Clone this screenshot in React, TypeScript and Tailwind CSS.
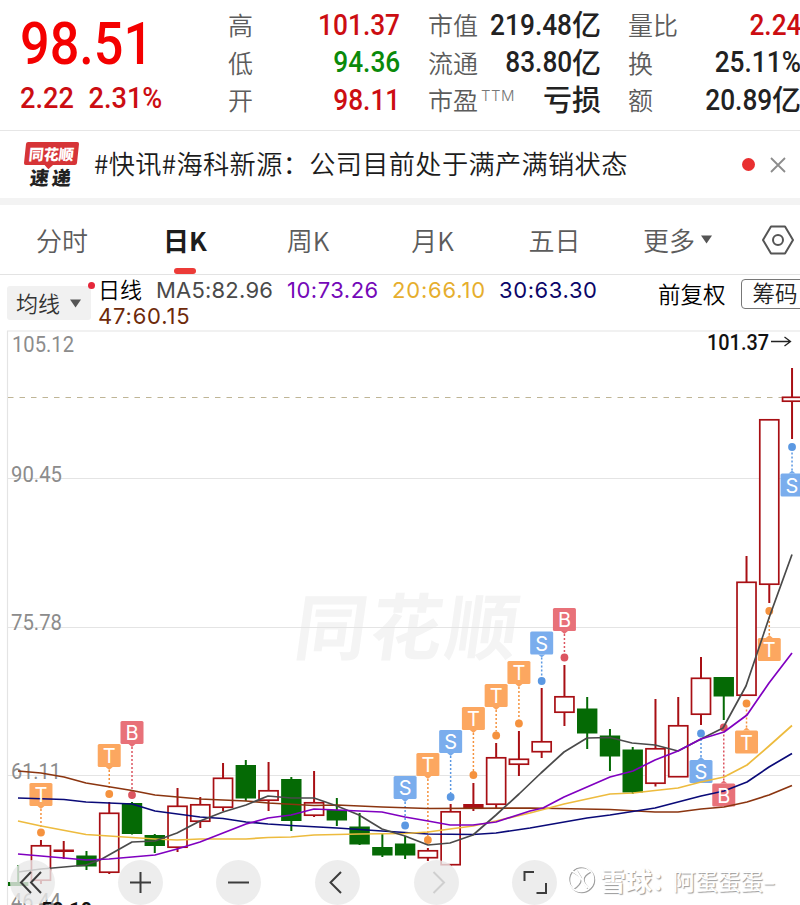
import React from 'react';

type PinKind = 'T' | 'B' | 'S';

interface Candle {
  up: boolean;
  top: number;
  bottom: number;
  high: number;
  low: number;
  solid?: boolean;
}

interface Pin {
  kind: PinKind;
  index: number;
  box: number;
  dot: number;
}

const CJK = "font-['Noto_Sans_CJK_SC',sans-serif]";
const STEP = 22.76;
const candleX = (i: number) => 18.2 + STEP * i;

const c = (up: boolean, top: number, bottom: number, high: number, low: number, solid = false): Candle => ({
  up, top, bottom, high, low, solid,
});

const candles: Candle[] = [
  c(false, 882, 886, 865, 886),
  c(true, 845, 881, 840, 884),
  c(true, 849.5, 852, 841, 859, true),
  c(false, 855.5, 866.5, 851, 870),
  c(true, 812.5, 873, 802, 874),
  c(false, 803, 834, 802, 834.5),
  c(false, 835, 846, 834, 853),
  c(true, 805.5, 848, 788, 852),
  c(true, 804, 822, 797, 828),
  c(true, 777.5, 808, 763, 811),
  c(false, 765, 798.5, 760, 801),
  c(true, 790, 801, 762, 811),
  c(false, 779, 821, 777, 831),
  c(true, 802, 816, 771, 817),
  c(false, 810, 820.5, 798, 826),
  c(false, 826.5, 844.5, 813, 845),
  c(false, 847, 855.5, 834, 857),
  c(false, 843.5, 855.5, 836, 859),
  c(true, 850, 858.5, 848, 861),
  c(true, 811, 865.5, 804, 866),
  c(true, 804, 808.5, 783, 811, true),
  c(true, 757, 805, 743, 808),
  c(true, 758.5, 765, 731, 776),
  c(true, 741, 752.5, 688, 758),
  c(true, 696, 713, 665, 726),
  c(false, 708.5, 733.5, 697, 749),
  c(false, 735.5, 756.5, 729, 771),
  c(false, 749.5, 792.5, 747, 794),
  c(true, 748, 784, 699, 786.5),
  c(true, 725, 777.5, 697, 777),
  c(true, 677.5, 715, 657, 725),
  c(false, 677, 696.5, 677, 720),
  c(true, 581.5, 696, 556, 696),
  c(true, 419, 585, 419, 603),
  c(true, 396.5, 402, 368, 439),
];

const averages = [
  { color: '#8b3510', points: '18,771 41,773 64,777 86,783 132,790.5 155,795 200,799 246,801 268,803 314,805.5 337,805 382,807 428,808.5 530,808 610,809.5 655,812 678,812 701,809 724,807 747,802 769,795 792,785.5' },
  { color: '#0a0a78', points: '18,798 64,799.5 86,802 132,804 155,811 200,817 223,818.5 246,822 268,824 291,825.5 337,828 382,831 428,834 473,834.5 496,833 530,828 587,818 610,815 655,808 701,796 724,791 747,782 769,767 792,753.5' },
  { color: '#edbb3e', points: '18,821 41,826 86,834.5 132,837.5 155,839 177,840 200,839 246,839 268,837.5 291,837 314,835 359,834 405,833.5 428,832 450,829 473,826 496,821 530,813 564,804 610,794 633,793 655,790.5 678,788 701,782 724,777 747,765 769,746 792,725.5' },
  { color: '#4a4a4a', points: '18,872 41,869 64,867 86,865 100,860 132,842 155,841 177,833 200,821 223,812 246,805 268,796 291,798 314,798 337,806 359,815 382,829 405,836 428,845 450,843 473,835 496,815 519,794 541,773 564,752 587,738 610,737.5 632,743 655,745 678,751 701,739 723,728 746,686 769,618 792,554.5' },
  { color: '#8000c0', points: '18,854 41,856 64,858 86,860 109,859 132,857 155,855 177,849 200,842 223,833 246,824 268,818 291,815 314,809 337,810 382,812 405,817 428,821 450,825 473,825 496,822 530,811 543,808 564,797 610,777 633,771 655,760 678,751 701,739 724,732 747,715 769,683 792,653' },
];

const pins: Pin[] = [
  { kind: 'T', index: 1, box: 783, dot: 832.5 },
  { kind: 'T', index: 4, box: 744, dot: 794 },
  { kind: 'B', index: 5, box: 721, dot: 795 },
  { kind: 'S', index: 17, box: 776, dot: 825.5 },
  { kind: 'T', index: 18, box: 753, dot: 840 },
  { kind: 'S', index: 19, box: 730, dot: 797 },
  { kind: 'T', index: 20, box: 707, dot: 775 },
  { kind: 'T', index: 21, box: 684, dot: 735.5 },
  { kind: 'T', index: 22, box: 661, dot: 723.5 },
  { kind: 'S', index: 23, box: 631.5, dot: 681 },
  { kind: 'B', index: 24, box: 608, dot: 657.5 },
  { kind: 'S', index: 30, box: 760, dot: 733.5 },
  { kind: 'B', index: 31, box: 783.5, dot: 727.5 },
  { kind: 'T', index: 32, box: 730.5, dot: 703.5 },
  { kind: 'T', index: 33, box: 638, dot: 611 },
  { kind: 'S', index: 34, box: 473.5, dot: 447 },
];

const pinColor: Record<PinKind, { box: string; dot: string }> = {
  T: { box: '#fca35a', dot: '#f5923e' },
  B: { box: '#e76b74', dot: '#dc5560' },
  S: { box: '#75aaec', dot: '#5b98e2' },
};

const Quote = () => (
  <header className="flex h-[130px] shrink-0 overflow-hidden whitespace-nowrap">
    <div className="w-[228px] shrink-0 pl-5 font-[Roboto] text-[#cc0d12]">
      <div className="mt-[8px] h-[70px] origin-left scale-x-[0.87] text-[60px] leading-[72px] font-medium text-[#f40000]">98.51</div>
      <div className="flex h-[40px] origin-left scale-x-[0.92] gap-[16px] text-[29.500px] leading-[40px] font-medium">
        <span>2.22</span>
        <span>2.31%</span>
      </div>
    </div>
    <Column
      className="w-[172px]"
      rows={[
        ['高', '101.37', 'text-[#cc0d12]'],
        ['低', '94.36', 'text-[#0a8a0a]'],
        ['开', '98.11', 'text-[#cc0d12]'],
      ]}
    />
    <Column
      className="ml-[28px] w-[173px]"
      rows={[
        ['市值', '219.48亿', 'text-[#222]'],
        ['流通', '83.80亿', 'text-[#222]'],
        ['市盈', '亏损', 'text-[#222]', 'TTM'],
      ]}
    />
    <Column
      className="ml-[27px] w-[173px]"
      rows={[
        ['量比', '2.24', 'text-[#cc0d12]'],
        ['换', '25.11%', 'text-[#222]'],
        ['额', '20.89亿', 'text-[#222]'],
      ]}
    />
  </header>
);

const Column = ({ rows, className }: { rows: string[][]; className: string }) => (
  <div className={`flex shrink-0 flex-col pt-[6px] ${className}`}>
    {rows.map(([label, value, color, sup]) => {
      const digits = value.replace(/[亿亏损]/g, '');
      const unit = value.slice(digits.length);
      return (
        <div key={label} className="flex h-[37.5px] items-center">
          <span className={`${CJK} text-[25px] leading-[37px] font-[350] text-[#5c5c5c]`}>{label}</span>
          {sup && <span className="ml-[3px] mb-[7px] font-[Inter] text-[15px] font-light tracking-[0.5px] text-[#777]">{sup}</span>}
          <span className={`ml-auto flex items-center ${color}`}>
            <span className="mt-px origin-right scale-x-[0.89] font-[Roboto] text-[29.500px] leading-[37px] font-medium">{digits}</span>
            <span className={`${CJK} mb-[2px] text-[29px] leading-[37px] font-medium`}>{unit}</span>
          </span>
        </div>
      );
    })}
  </div>
);

const News = () => (
  <div className={`flex h-[68px] shrink-0 items-center border-t border-[#e6e6e6] ${CJK}`}>
    <div className="ml-[23px] flex w-[56px] flex-col items-center leading-none">
      <div className="relative flex h-[23px] w-[53px] -skew-x-6 items-center justify-center rounded-[2px] bg-[#d63437] text-[15px] font-black text-white">
        <span>同花顺</span>
        <span className="absolute -bottom-[3px] left-[22px] size-[6px] rotate-45 bg-[#d63437]" />
      </div>
      <div className="mt-[2px] flex -skew-x-6 gap-[3px] text-[19px] leading-[20px] font-black text-[#222]">
        <span>速</span>
        <span>递</span>
      </div>
    </div>
    <p className="mb-[2px] ml-[15px] text-[26.200px] tracking-[0.35px] whitespace-nowrap text-[#1c1c1c] font-[350]">#快讯#海科新源：公司目前处于满产满销状态</p>
    <span className="mr-[15px] ml-auto size-[13px] rounded-full bg-[#e92f30]" />
    <svg className="mr-[14px]" width="16" height="16" viewBox="0 0 16 16" stroke="#8c8c8c" strokeWidth="1.8">
      <path d="M1 1L15 15M15 1L1 15" />
    </svg>
  </div>
);

const Tabs = () => (
  <nav className={`relative flex h-[69px] shrink-0 items-center whitespace-nowrap text-[26px] font-[350] text-[#5c5c5c] ${CJK}`}>
    <span className="w-[127px] pl-[36px]">分时</span>
    <span className="relative flex h-full w-[116px] items-center justify-center font-bold text-[#1d1d1d]">
      日K
      <span className="absolute bottom-0 left-[47px] h-[6px] w-[22px] rounded-full bg-[#ec3b38]" />
    </span>
    <span className="w-[130px] text-center">周K</span>
    <span className="w-[119px] text-center">月K</span>
    <span className="w-[125px] text-center">五日</span>
    <span className="flex items-center pl-[26px]">
      更多
      <svg className="ml-[5px]" width="13" height="9" viewBox="0 0 13 9" fill="#555">
        <path d="M1 .5h11L6.500 8.500z" />
      </svg>
    </span>
    <svg className="mr-[6px] ml-auto" width="32" height="30" viewBox="0 0 32 30" fill="none" stroke="#555" strokeWidth="2">
      <path d="M9 1.500h14l8 13.500l-8 13.500H9L1 15z" strokeLinejoin="round" />
      <circle cx="16" cy="15" r="5" />
    </svg>
  </nav>
);

const Legend = () => (
  <div className={`flex h-[56px] shrink-0 border-t border-[#e3e3e3] whitespace-nowrap ${CJK}`}>
    <div className="relative mt-[11px] ml-[7px] flex h-[34px] w-[84px] shrink-0 items-center rounded-[3px] bg-[#f1f1f1] pl-[9px] text-[22px] leading-[30px] text-[#333]">
      <span className="mb-[3px] font-[350]">均线</span>
      <svg className="ml-[9px]" width="13" height="9" viewBox="0 0 13 9" fill="#555">
        <path d="M1 .5h11L6.500 8.500z" />
      </svg>
      <span className="absolute -top-[4px] left-[81px] size-[7px] rounded-full bg-[#e5273a]" />
    </div>
    <div className="ml-[7px] w-[540px] shrink-0 pt-[2px] font-[Inter] text-[22px] leading-[26px] tracking-[0.2px]">
      <div className="flex">
        <span className={`-mt-[2px] w-[58px] font-[350] tracking-normal text-black ${CJK}`}>日线</span>
        <span className="w-[131px] text-[#4a4a4a]">MA5:82.96</span>
        <span className="w-[105px] tracking-[0.5px] text-[#7408b8]">10:73.26</span>
        <span className="w-[107px] tracking-[0.8px] text-[#e6ae2e]">20:66.10</span>
        <span className="tracking-[0.6px] text-[#0b0668]">30:63.30</span>
      </div>
      <div className="tracking-[0.8px] text-[#6e2a0a]">47:60.15</div>
    </div>
    <span className="mt-px ml-[20px] shrink-0 text-[22.500px] font-[350] leading-[34px] text-black">前复权</span>
    <span className="mt-[4px] ml-[15px] flex h-[30px] w-[80px] shrink-0 items-center rounded-[4px] border border-[#777] pb-[3px] pl-[11px] text-[22.500px] font-[350] leading-none text-[#222]">
      筹码
    </span>
  </div>
);

const CandleShape = ({ candle, index }: { candle: Candle; index: number }) => {
  const x = candleX(index);
  const color = candle.up ? '#a80f14' : '#056a05';
  return (
    <g>
      <line x1={x} x2={x} y1={candle.high} y2={candle.low} stroke={color} strokeWidth="2" />
      {candle.up && !candle.solid ? (
        <rect x={x - 9.500} y={candle.top + 0.8} width="19" height={candle.bottom - candle.top - 1.6} fill="#fff" stroke={color} strokeWidth="1.7" />
      ) : (
        <rect x={x - 10.200} y={candle.top} width="20.400" height={candle.bottom - candle.top} fill={color} />
      )}
    </g>
  );
};

const PinShape = ({ pin }: { pin: Pin }) => {
  const x = candleX(pin.index);
  const below = pin.box > pin.dot;
  const edge = below ? pin.box : pin.box + 23;
  const dir = below ? -1 : 1;
  const { box, dot } = pinColor[pin.kind];
  return (
    <g>
      <line x1={x} x2={x} y1={edge + dir * 3} y2={pin.dot - dir * 4} stroke={dot} strokeWidth="1.5" strokeDasharray="2 2" />
      <circle cx={x} cy={pin.dot} r="3.900" fill={dot} />
      <rect x={x - 11.500} y={pin.box} width="23" height="23" rx="1.500" fill={box} fillOpacity=".96" />
      <path d={`M${x - 3.5} ${edge}h7l-3.500 ${dir * 3}z`} fill={box} />
    </g>
  );
};

const Chart = () => (
  <svg className="block shrink-0" width="800" height="575" viewBox="0 330 800 575">
    <g transform="translate(292 654) skewX(-8)">
      <text textLength="223" className="font-['Noto_Sans_CJK_SC',sans-serif] text-[72px] font-bold" fill="#f4f4f4">同花顺</text>
    </g>
    <path d="M7.500 331V905M7 331H800M7 478.500H800M7 627.500H800M7 775.500H800" fill="none" stroke="#e4e4e4" strokeWidth="1.2" />
    <line x1="8" x2="782" y1="397.500" y2="397.500" stroke="#bfb596" strokeWidth="1.2" strokeDasharray="5.500 6" />
    <g className="font-[Roboto] text-[21.500px]" fill="#8c8c8c">
      <text x="12" y="352" textLength="62" lengthAdjust="spacingAndGlyphs">105.12</text>
      <text x="11" y="482" textLength="51" lengthAdjust="spacingAndGlyphs">90.45</text>
      <text x="11" y="630" textLength="51" lengthAdjust="spacingAndGlyphs">75.78</text>
      <text x="11" y="779" textLength="50" lengthAdjust="spacingAndGlyphs">61.11</text>
      <text x="11" y="909" textLength="50" lengthAdjust="spacingAndGlyphs">46.44</text>
    </g>
    {candles.map((candle, i) => (
      <CandleShape key={i} candle={candle} index={i} />
    ))}
    {pins.map((pin) => (
      <PinShape key={pin.index} pin={pin} />
    ))}
    {averages.map((line) => (
      <polyline key={line.color} points={line.points} fill="none" stroke={line.color} strokeWidth="1.7" strokeLinejoin="round" />
    ))}
    <g className="font-[Inter] text-[20px]" fill="#fff" textAnchor="middle">
      {pins.map((pin) => (
        <text key={pin.index} x={candleX(pin.index)} y={pin.box + 19}>{pin.kind}</text>
      ))}
    </g>
    <text x="707" y="350" textLength="62" lengthAdjust="spacingAndGlyphs" className="font-[Roboto] text-[21.500px] font-medium" fill="#111">101.37</text>
    <path d="M771 341.500H790M784.500 337L790.500 341.500L784.500 346" fill="none" stroke="#222" strokeWidth="1.300" />
    <text x="41" y="916.500" textLength="51" lengthAdjust="spacingAndGlyphs" className="font-[Roboto] text-[21px] font-bold" fill="#111">50.10</text>
  </svg>
);

const controls = [
  { x: 'left-[10px]', d: 'M21 12L11 22.500L21 33M31 12L21 22.500L31 33', color: '#3c3c3c' },
  { x: 'left-[118px]', d: 'M12 22.500H33M22.500 12V33', color: '#3c3c3c' },
  { x: 'left-[216px]', d: 'M12 22.500H33', color: '#3c3c3c' },
  { x: 'left-[315px]', d: 'M26 12L15.500 22.500L26 33', color: '#3c3c3c' },
  { x: 'left-[414px]', d: 'M19.500 12L30 22.500L19.500 33', color: '#cfcfcf' },
  { x: 'left-[512px]', d: 'M12.500 21V12H22M24.500 33H34V23', color: '#3c3c3c' },
];

const Controls = () => (
  <>
    {controls.map((item) => (
      <button key={item.x} className={`absolute top-[860px] size-[45px] rounded-full bg-[#e9e9e9]/80 ${item.x}`}>
        <svg width="45" height="45" viewBox="0 0 45 45" fill="none" stroke={item.color} strokeWidth="2">
          <path d={item.d} />
        </svg>
      </button>
    ))}
  </>
);

const Signature = () => (
  <div className={`absolute top-[862px] left-[567px] flex items-center whitespace-nowrap text-white ${CJK} [text-shadow:1px_1px_1px_#999]`}>
    <svg width="30" height="34" viewBox="0 0 30 34" fill="none" strokeWidth="1.500">
      <g stroke="#a0a0a0" transform="translate(1 1)">
        <circle cx="14" cy="16" r="12.500" />
        <path d="M5 8c4 2 8 5 8 8s-3 7-7 9M23 8c-4 2-7 5-7 8s3 7 6 9M9 7l11 18" />
      </g>
      <g stroke="#fff">
        <circle cx="14" cy="16" r="12.500" />
        <path d="M5 8c4 2 8 5 8 8s-3 7-7 9M23 8c-4 2-7 5-7 8s3 7 6 9M9 7l11 18" />
      </g>
    </svg>
    <span className="ml-[3px] text-[26px] leading-[36px] font-bold">雪球</span>
    <span className="w-[21px] text-[24px] leading-[36px] font-bold">：</span>
    <span className="text-[22.500px] leading-[36px]">阿蛋蛋蛋–</span>
  </div>
);

export default function App() {
  return (
    <main className="relative flex h-[905px] w-[800px] flex-col overflow-hidden bg-white">
      <Quote />
      <News />
      <div className="h-[7px] shrink-0 bg-[#f3f3f3]" />
      <Tabs />
      <Legend />
      <Chart />
      <Controls />
      <Signature />
    </main>
  );
}
